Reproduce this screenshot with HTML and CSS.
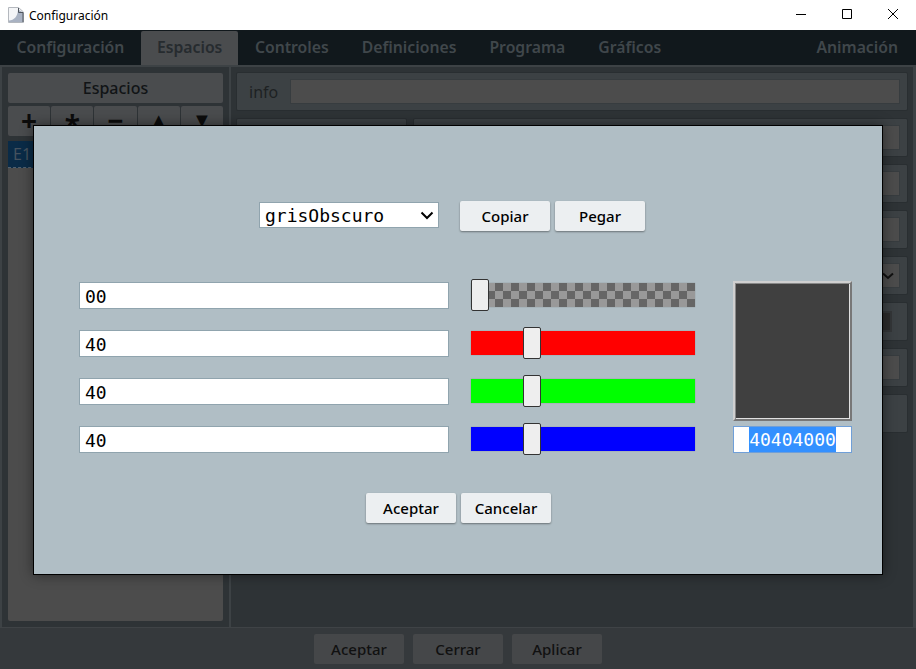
FILE: index.html
```html
<!DOCTYPE html>
<html lang="es">
<head>
    <meta charset="UTF-8">
    <meta name="viewport" content="width=device-width, initial-scale=1.0">
    <title>Configuración</title>
    <link rel="stylesheet" href="styles.css">
</head>
<body>

    <!-- Barra de título -->
    <header class="titlebar">
        <svg class="app-icon" width="16" height="16" viewBox="0 0 16 16">
            <path d="M0.500 0.500H10.500L15.500 5V15.500H0.500Z" fill="#f4f5f7" stroke="#b4b8be"/>
            <path d="M1 15V13.500C6 13 9.500 10 10 3H11L15 5.500V15Z" fill="#a9b2c2"/>
            <path d="M10.500 1V5.500H15V15" fill="none" stroke="#50565e"/>
        </svg>
        <span class="titlebar-text">Configuración</span>
        <div class="window-controls">
            <svg width="46" height="30" viewBox="0 0 46 30"><path d="M18 14.500H28" stroke="#000"/></svg>
            <svg width="46" height="30" viewBox="0 0 46 30"><path d="M18.500 9.500H27.500V18.500H18.500Z" fill="none" stroke="#000"/></svg>
            <svg width="46" height="30" viewBox="0 0 46 30"><path d="M18 9L28 19M28 9L18 19" stroke="#000"/></svg>
        </div>
    </header>

    <!-- Pestañas -->
    <nav class="tabs">
        <span class="tab">Configuración</span>
        <span class="tab tab-active">Espacios</span>
        <span class="tab">Controles</span>
        <span class="tab">Definiciones</span>
        <span class="tab">Programa</span>
        <span class="tab">Gráficos</span>
        <span class="tab tab-last">Animación</span>
    </nav>

    <main class="main">
        <aside class="side">
            <div class="side-title">Espacios</div>
            <div class="side-tools">
                <span class="tool">+</span>
                <span class="tool tool-star">*</span>
                <span class="tool">−</span>
                <span class="tool tool-arrow">▲</span>
                <span class="tool tool-arrow">▼</span>
            </div>
            <div class="side-list">
                <div class="side-item">E1</div>
            </div>
        </aside>

        <section class="rows">
            <div class="row">
                <div class="box box-full">
                    <span class="box-label">info</span>
                    <div class="box-input"></div>
                </div>
            </div>
            <div class="row">
                <div class="box box-side"></div>
                <div class="box box-full"><div class="box-input"></div></div>
            </div>
            <div class="row">
                <div class="box box-full"><div class="box-input"></div></div>
            </div>
            <div class="row">
                <div class="box box-full"><div class="box-input"></div></div>
            </div>
            <div class="row">
                <div class="box box-full">
                    <div class="box-input box-select">
                        <svg width="12" height="8" viewBox="0 0 12 8"><path d="M1 1.500L6 6L11 1.500" fill="none" stroke="#111" stroke-width="2"/></svg>
                    </div>
                </div>
            </div>
            <div class="row">
                <div class="box box-full box-end"><div class="box-dark"></div></div>
            </div>
            <div class="row">
                <div class="box box-full"><div class="box-input"></div></div>
            </div>
            <div class="row">
                <div class="box box-full"></div>
            </div>
        </section>
    </main>

    <footer class="footer">
        <button class="footer-btn">Aceptar</button>
        <button class="footer-btn">Cerrar</button>
        <button class="footer-btn">Aplicar</button>
    </footer>

    <!-- Diálogo de color -->
    <div class="dialog">
        <div class="dialog-top">
            <div class="select-wrap">
                <select class="color-select">
                    <option>grisObscuro</option>
                </select>
                <svg class="select-arrow" width="14" height="9" viewBox="0 0 14 9"><path d="M1.500 1.500L7 7L12.500 1.500" fill="none" stroke="#000" stroke-width="2"/></svg>
            </div>
            <div class="btn-group">
                <button class="btn">Copiar</button>
                <button class="btn">Pegar</button>
            </div>
        </div>

        <div class="dialog-mid">
            <div class="channels">
                <input class="channel-input" type="text" value="00">
                <input class="slider slider-alpha" type="range" min="0" max="255" value="0">
                <input class="channel-input" type="text" value="40">
                <input class="slider slider-red" type="range" min="0" max="255" value="64">
                <input class="channel-input" type="text" value="40">
                <input class="slider slider-green" type="range" min="0" max="255" value="64">
                <input class="channel-input" type="text" value="40">
                <input class="slider slider-blue" type="range" min="0" max="255" value="64">
            </div>
            <div class="preview">
                <div class="swatch"></div>
                <div class="hex"><span class="hex-selected">40404000</span></div>
            </div>
        </div>

        <div class="btn-group dialog-bottom">
            <button class="btn">Aceptar</button>
            <button class="btn">Cancelar</button>
        </div>
    </div>

</body>
</html>
```

FILE: styles.css
```css
* {
    box-sizing: border-box;
}

body {
    margin: 0;
    width: 916px;
    height: 669px;
    display: flex;
    flex-direction: column;
    overflow: hidden;
    position: relative;
    font-family: "Noto Sans", Arial, sans-serif;
    background-color: #2e3336;
}

/* Barra de título */
.titlebar {
    height: 30px;
    flex: none;
    display: flex;
    align-items: center;
    padding-left: 8px;
    background-color: #fff;
}

.app-icon {
    flex: none;
}

.titlebar-text {
    margin-left: 5px;
    font-size: 12px;
    color: #000;
}

.window-controls {
    margin-left: auto;
    display: flex;
}

.window-controls svg {
    display: block;
}

/* Pestañas */
.tabs {
    height: 35px;
    flex: none;
    display: flex;
    align-items: flex-end;
    background-color: #11181c;
}

.tab {
    height: 34px;
    padding: 0 16.500px;
    font-size: 15.750px;
    font-weight: 600;
    line-height: 33px;
    color: #40474b;
    white-space: nowrap;
}

.tab-active {
    padding: 0 16px;
    background-color: #4a4c4e;
    border-radius: 2px 2px 0 0;
    color: #262b2f;
}

.tab-last {
    margin-left: auto;
    padding-right: 18px;
}

/* Contenido */
.main {
    flex: 1;
    min-height: 0;
    display: flex;
}

.side {
    width: 231px;
    flex: none;
    display: flex;
    flex-direction: column;
    padding: 6px;
    background-color: #2e3336;
    border: 2px solid #3d4245;
    border-bottom: none;
}

.side-title {
    height: 30px;
    flex: none;
    background-color: #4a4c4e;
    border-radius: 2px;
    font-size: 16px;
    font-weight: 500;
    line-height: 30px;
    text-align: center;
    color: #111416;
}

.side-tools {
    height: 30px;
    flex: none;
    margin-top: 3px;
    display: flex;
    gap: 1px;
}

.tool {
    flex: 1;
    background-color: #4a4c4e;
    border-radius: 2px;
    font-size: 28px;
    font-weight: 700;
    line-height: 28px;
    text-align: center;
    color: #0c0c0c;
}

.tool-star {
    line-height: 38px;
}

.tool-arrow {
    font-size: 20px;
}

.side-list {
    flex: 1;
    margin-top: 5px;
    background-color: #4c4c4c;
    border-radius: 2px;
}

.side-item {
    height: 27px;
    padding-left: 5px;
    background-color: #0a2b47;
    border-bottom: 1px dashed #4f6070;
    font-size: 16px;
    line-height: 26px;
    color: #45525e;
}

.rows {
    flex: 1;
    display: flex;
    flex-direction: column;
    gap: 7px;
    padding: 5px;
    border-top: 2px solid #3d4245;
    border-right: 3px solid #3d4245;
}

.row {
    height: 39px;
    flex: none;
    display: flex;
    gap: 6px;
}

.box {
    display: flex;
    align-items: center;
    gap: 12px;
    padding: 0 7px;
    background-color: #3c4144;
    border: 1px solid #292e31;
    border-radius: 2px;
}

.box-side {
    width: 171px;
    flex: none;
}

.box-full {
    flex: 1;
}

.box-end {
    justify-content: flex-end;
}

.box-label {
    padding-left: 5px;
    font-size: 16px;
    color: #1e2123;
}

.box-input {
    flex: 1;
    height: 25px;
    background-color: #4c4c4c;
    border: 1px solid #373c3f;
}

.box-select {
    display: flex;
    align-items: center;
    justify-content: flex-end;
    padding-right: 5px;
}

.box-dark {
    width: 160px;
    height: 21px;
    margin-right: 8px;
    background-color: #2b2b2b;
    border: 2px solid #333638;
}

/* Pie */
.footer {
    height: 42px;
    flex: none;
    display: flex;
    gap: 9px;
    padding: 6px 0 0 314px;
    background-color: #35393c;
    border-top: 1px solid #3f4346;
}

.footer-btn {
    width: 90px;
    height: 30px;
    padding: 0;
    border: none;
    border-radius: 2px;
    background-color: #454749;
    font-family: inherit;
    font-size: 15px;
    font-weight: 500;
    color: #111;
}

/* Diálogo de color */
.dialog {
    position: absolute;
    left: 33px;
    top: 125px;
    width: 850px;
    height: 450px;
    padding: 75px 0 0 45px;
    background-color: #b0bec5;
    border: 1px solid #000;
    box-shadow: 0 0 12px rgba(0, 0, 0, 0.45);
}

.dialog-top {
    display: flex;
    align-items: flex-start;
    gap: 21px;
    padding-left: 180px;
}

.select-wrap {
    position: relative;
    width: 180px;
    height: 26px;
    margin-top: 1px;
}

.color-select {
    appearance: none;
    -webkit-appearance: none;
    display: block;
    width: 100%;
    height: 100%;
    padding: 0 5px;
    border: 1px solid #90a4ae;
    border-radius: 0;
    background-color: #fff;
    font-family: "DejaVu Sans Mono", monospace;
    font-size: 18px;
    color: #000;
}

.select-arrow {
    position: absolute;
    right: 5px;
    top: 9px;
    pointer-events: none;
}

.btn-group {
    display: flex;
    gap: 5px;
}

.btn {
    width: 90px;
    height: 30px;
    padding: 0;
    border: none;
    border-radius: 2px;
    background-color: #eceff1;
    box-shadow: 0 1px 2px rgba(0, 0, 0, 0.4);
    font-family: inherit;
    font-size: 15px;
    font-weight: 500;
    color: #000;
}

.dialog-mid {
    display: flex;
    margin-top: 51px;
}

.channels {
    display: grid;
    grid-template-columns: 370px 224px;
    grid-auto-rows: 27px;
    column-gap: 22px;
    row-gap: 21px;
    align-items: center;
}

.channel-input {
    width: 100%;
    height: 27px;
    padding: 1px 5px 0;
    border: 1px solid #90a4ae;
    border-radius: 0;
    background-color: #fff;
    font-family: "DejaVu Sans Mono", monospace;
    font-size: 18px;
    color: #000;
}

.slider {
    appearance: none;
    -webkit-appearance: none;
    display: block;
    width: 224px;
    height: 24px;
    margin: 0 0 2px;
    background: none;
}

.slider::-webkit-slider-runnable-track {
    height: 24px;
    box-shadow: 0 0 1px rgba(0, 0, 0, 0.3);
}

.slider::-webkit-slider-thumb {
    -webkit-appearance: none;
    width: 18px;
    height: 32px;
    margin-top: -4px;
    background-color: #eee;
    border: 1px solid #333;
    border-radius: 2px;
}

.slider-alpha::-webkit-slider-runnable-track {
    background: repeating-conic-gradient(#666 0 25%, #999 0 50%) 0 0 / 16px 16px;
}

.slider-red::-webkit-slider-runnable-track {
    background-color: #f00;
}

.slider-green::-webkit-slider-runnable-track {
    background-color: #0f0;
}

.slider-blue::-webkit-slider-runnable-track {
    background-color: #00f;
}

.preview {
    width: 119px;
    margin-left: 38px;
    margin-top: -1px;
    display: flex;
    flex-direction: column;
    gap: 5px;
}

.swatch {
    height: 140px;
    background-color: #404040;
    border: 2px solid;
    border-color: #d0d0d0 #777 #777 #d0d0d0;
    box-shadow: inset 1px 1px 0 #888, inset -1px -1px 0 #e0e0e0;
}

.hex {
    height: 27px;
    display: flex;
    align-items: center;
    justify-content: center;
    background-color: #fff;
    border: 1px solid #6f9fd8;
    font-family: "DejaVu Sans Mono", monospace;
    font-size: 18px;
}

.hex-selected {
    background-color: #3390ff;
    color: #fff;
    line-height: 25px;
}

.dialog-bottom {
    margin-top: 40px;
    padding-left: 287px;
}
```
